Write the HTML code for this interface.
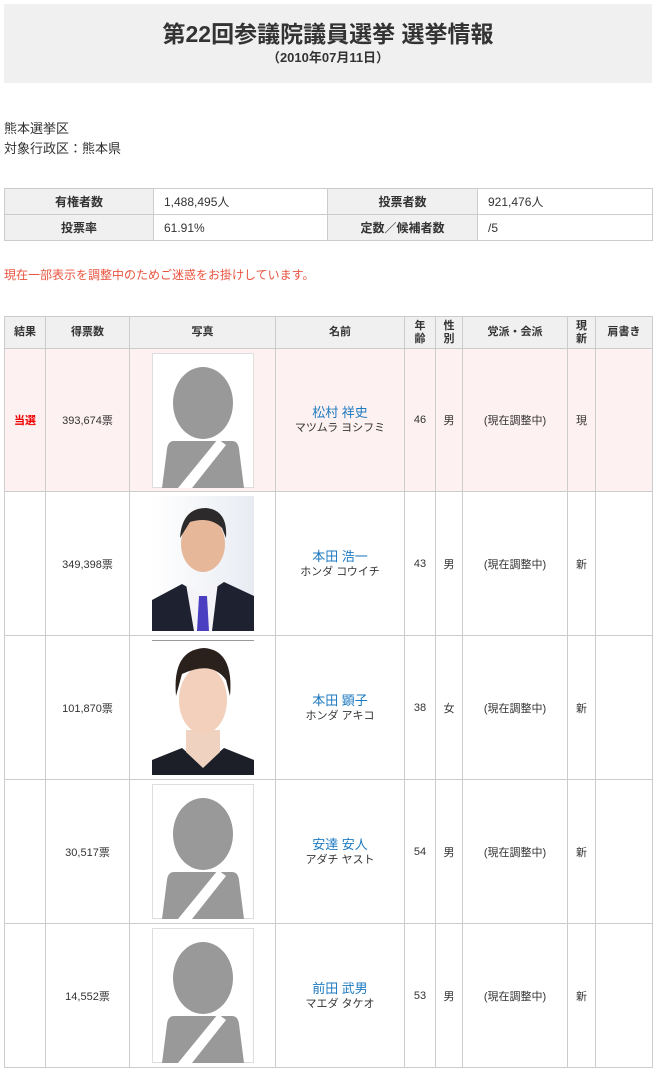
<!DOCTYPE html>
<html><head><meta charset="utf-8"><style>
*{margin:0;padding:0;box-sizing:border-box}
body{width:656px;height:1073px;background:#fff;font-family:"Liberation Sans","Noto Sans CJK JP",sans-serif;color:#333;font-size:12px;position:relative;overflow:hidden}
.hd{position:absolute;left:4px;top:4px;width:648px;height:79px;background:#f0f0f0;text-align:center}
.hd h1{font-size:23px;font-weight:bold;margin-top:16px;line-height:28px;color:#333}
.hd p{font-size:13px;font-weight:bold;line-height:18px;margin-top:1px}
.pl{position:absolute;left:4px;top:119px;font-size:13px;line-height:20px}
table{border-collapse:collapse;position:absolute;table-layout:fixed}
td,th{border:1px solid #ccc;text-align:center;vertical-align:middle}
th{background:#f0f0f0;font-weight:bold;font-size:12px}
.info{left:4px;top:188px;width:648px}
.info td,.info th{height:26px}
.info td{text-align:left;padding-left:10px;font-size:12px}
.red{position:absolute;left:4px;top:266px;color:#e8533f;font-size:12px}
.main{left:4px;top:316px;width:648px}
.main th{height:32px;font-size:11px;line-height:13px}
.main td{height:144px;font-size:11px}
.main tr.win td{height:143px;background:#fdf1f1}
.nm{color:#1e7ac0;font-size:13px;line-height:16px}
.kn{font-size:11px;line-height:14px}
.ph{display:block;margin:0 auto;width:102px;height:135px}
</style></head><body>
<div class="hd"><h1>第22回参議院議員選挙 選挙情報</h1><p>（2010年07月11日）</p></div>
<div class="pl">熊本選挙区<br>対象行政区：熊本県</div>
<table class="info"><colgroup><col style="width:149px"><col style="width:174px"><col style="width:150px"><col style="width:175px"></colgroup>
<tr><th>有権者数</th><td>1,488,495人</td><th>投票者数</th><td>921,476人</td></tr>
<tr><th>投票率</th><td>61.91%</td><th>定数／候補者数</th><td>/5</td></tr></table>
<div class="red">現在一部表示を調整中のためご迷惑をお掛けしています。</div>
<table class="main"><colgroup><col style="width:41px"><col style="width:84px"><col style="width:146px"><col style="width:129px"><col style="width:31px"><col style="width:27px"><col style="width:105px"><col style="width:28px"><col style="width:57px"></colgroup>
<tr><th>結果</th><th>得票数</th><th>写真</th><th>名前</th><th>年<br>齢</th><th>性<br>別</th><th>党派・会派</th><th>現<br>新</th><th>肩書き</th></tr>
<tr class="win"><td style="color:#e00;font-weight:bold">当選</td><td>393,674票</td><td><svg class="ph" viewBox="0 0 102 135"><rect x=".5" y=".5" width="101" height="134" fill="#fff" stroke="#ddd"/><ellipse cx="51" cy="50" rx="30" ry="36" fill="#999"/><path d="M22 88Q16 88 15 96L10 135H92L87 96Q86 88 80 88Z" fill="#999"/><path d="M66 86L74 92L40 135H26Z" fill="#fff"/></svg></td><td><div class="nm">松村 祥史</div><div class="kn">マツムラ ヨシフミ</div></td><td>46</td><td>男</td><td>(現在調整中)</td><td>現</td><td></td></tr>
<tr><td></td><td>349,398票</td><td><svg class="ph" viewBox="0 0 102 135"><defs><linearGradient id="g" x1="0" x2="1"><stop offset="0" stop-color="#fff"/><stop offset="1" stop-color="#e8ecf2"/></linearGradient></defs><rect width="102" height="135" fill="url(#g)"/><path d="M0 104L30 88L51 100L72 86L102 100V135H0Z" fill="#1e2230"/><path d="M34 88L51 98L66 86L60 135H42Z" fill="#f4f4f8"/><path d="M47 100L55 100L57 135H45Z" fill="#4a3fc0"/><ellipse cx="51" cy="48" rx="22" ry="28" fill="#e7b79a"/><path d="M28 42Q30 12 54 12Q76 14 74 42L70 32Q58 20 38 26Z" fill="#2c2a2a"/></svg></td><td><div class="nm">本田 浩一</div><div class="kn">ホンダ コウイチ</div></td><td>43</td><td>男</td><td>(現在調整中)</td><td>新</td><td></td></tr>
<tr><td></td><td>101,870票</td><td><svg class="ph" viewBox="0 0 102 135"><rect width="102" height="135" fill="#fff"/><line x1="0" y1=".5" x2="102" y2=".5" stroke="#999"/><path d="M0 120L30 108L51 126L72 108L102 120V135H0Z" fill="#1c1f28"/><path d="M34 90H68V112L51 128L34 112Z" fill="#f0d2c0"/><ellipse cx="51" cy="60" rx="24" ry="34" fill="#f2d0bb"/><path d="M24 56Q20 10 52 8Q82 10 78 56L74 40Q60 20 30 34Z" fill="#2a201c"/></svg></td><td><div class="nm">本田 顕子</div><div class="kn">ホンダ アキコ</div></td><td>38</td><td>女</td><td>(現在調整中)</td><td>新</td><td></td></tr>
<tr><td></td><td>30,517票</td><td><svg class="ph" viewBox="0 0 102 135"><rect x=".5" y=".5" width="101" height="134" fill="#fff" stroke="#ddd"/><ellipse cx="51" cy="50" rx="30" ry="36" fill="#999"/><path d="M22 88Q16 88 15 96L10 135H92L87 96Q86 88 80 88Z" fill="#999"/><path d="M66 86L74 92L40 135H26Z" fill="#fff"/></svg></td><td><div class="nm">安達 安人</div><div class="kn">アダチ ヤスト</div></td><td>54</td><td>男</td><td>(現在調整中)</td><td>新</td><td></td></tr>
<tr><td></td><td>14,552票</td><td><svg class="ph" viewBox="0 0 102 135"><rect x=".5" y=".5" width="101" height="134" fill="#fff" stroke="#ddd"/><ellipse cx="51" cy="50" rx="30" ry="36" fill="#999"/><path d="M22 88Q16 88 15 96L10 135H92L87 96Q86 88 80 88Z" fill="#999"/><path d="M66 86L74 92L40 135H26Z" fill="#fff"/></svg></td><td><div class="nm">前田 武男</div><div class="kn">マエダ タケオ</div></td><td>53</td><td>男</td><td>(現在調整中)</td><td>新</td><td></td></tr>
</table>
</body></html>
